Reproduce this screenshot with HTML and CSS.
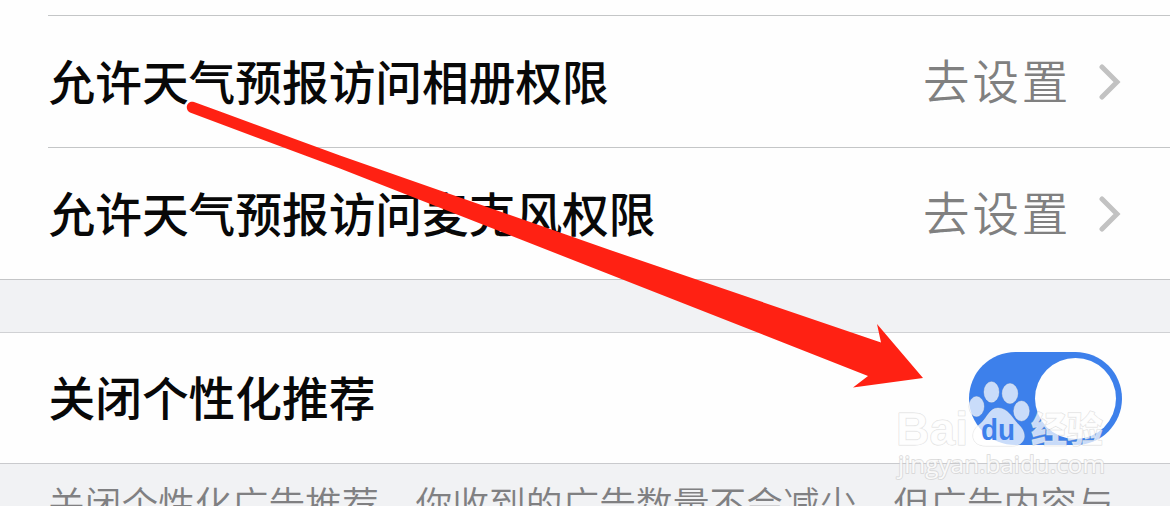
FILE: index.html
```html
<!DOCTYPE html>
<html lang="zh-CN">
<head>
<meta charset="utf-8">
<title>权限设置</title>
<link rel="stylesheet" href="styles.css">
</head>
<body>
<main class="screen">
  <section class="group">
    <div class="row">
      <span class="title">允许天气预报访问相册权限</span>
      <span class="value">去设置</span>
      <svg class="chevron" viewBox="0 0 22 36"><path d="M3 3 18 18 3 33"/></svg>
    </div>
    <div class="row">
      <span class="title">允许天气预报访问麦克风权限</span>
      <span class="value">去设置</span>
      <svg class="chevron" viewBox="0 0 22 36"><path d="M3 3 18 18 3 33"/></svg>
    </div>
  </section>
  <section class="switch-row">
    <span class="title">关闭个性化推荐</span>
    <span class="toggle"><span class="knob"></span></span>
  </section>
  <p class="note">关闭个性化广告推荐，你收到的广告数量不会减少，但广告内容与</p>
  <svg class="overlay" viewBox="0 0 1170 506">
    <path class="arrow" d="M194 102Q268 129 340 155.500L610 250 881 342.500 877 324 923 378 853 387.500 868 376 550 251 340 168.500 190 112.500C184 109 187 100 194 102Z"/>
    <g class="mark">
      <text class="latin" x="896" y="445" textLength="72" lengthAdjust="spacingAndGlyphs">Bai</text>
      <g class="paw">
        <ellipse cx="976.500" cy="406.500" rx="7.500" ry="10"/>
        <ellipse cx="991.500" cy="392" rx="7.500" ry="10.300"/>
        <ellipse cx="1010" cy="393.500" rx="7.800" ry="10"/>
        <ellipse cx="1021.500" cy="411" rx="7.800" ry="10"/>
        <path d="M998 408C1008 408 1012 418 1018 424 1029 434 1025 446 1012 446H986C970 446 970 431 979 425 987 419 989 408 998 408Z"/>
      </g>
      <text class="du" x="981" y="440" textLength="34" lengthAdjust="spacingAndGlyphs">du</text>
      <text class="cn" x="1031" y="443" textLength="72" lengthAdjust="spacingAndGlyphs">经验</text>
      <text class="url" x="898" y="473" textLength="207" lengthAdjust="spacingAndGlyphs">jingyan.baidu.com</text>
    </g>
  </svg>
</main>
</body>
</html>
```
FILE: styles.css
```css
body {
  margin: 0;
  font-family: "Noto Sans CJK SC", sans-serif;
}
.screen {
  position: relative;
  width: 1170px;
  height: 506px;
  overflow: hidden;
  background: #f1f2f4;
}
.group {
  box-sizing: border-box;
  height: 280px;
  padding: 15px 0 0 48px;
  background: #fefefe;
  border-bottom: 1px solid #c4c5c7;
}
.row {
  box-sizing: border-box;
  display: flex;
  align-items: center;
  height: 132px;
  padding: 0 49px 0 0;
  border-top: 1px solid #c4c6c7;
}
.title {
  flex: 1;
  margin-bottom: 3px;
  padding-left: .5px;
  font-size: 46.700px;
  font-weight: 500;
  line-height: 68px;
  color: #080808;
  white-space: nowrap;
}
.switch-row .title {
  margin-bottom: 5px;
}
.value {
  margin: 0 28px 6px 0;
  font-size: 46.500px;
  font-weight: 350;
  letter-spacing: 2.800px;
  line-height: 68px;
  color: #808080;
}
.chevron {
  width: 22px;
  height: 36px;
  fill: none;
  stroke: #c2c2c2;
  stroke-width: 5;
  stroke-linecap: round;
}
.switch-row {
  box-sizing: border-box;
  display: flex;
  align-items: center;
  height: 132px;
  margin-top: 52px;
  padding: 0 48px;
  background: #fefefe;
  border-top: 1px solid #d0d1d4;
  border-bottom: 1px solid #c9cacd;
}
.toggle {
  box-sizing: border-box;
  display: flex;
  justify-content: flex-end;
  width: 153px;
  height: 93px;
  padding: 6px;
  border-radius: 47px;
  background: #3d80eb;
}
.knob {
  width: 81px;
  height: 81px;
  border-radius: 50%;
  background: #fefefe;
}
.note {
  margin: 0;
  padding: 11px 0 0 48px;
  font-size: 36.750px;
  font-weight: 350;
  line-height: 54px;
  color: #808082;
  white-space: nowrap;
}
.overlay {
  position: absolute;
  inset: 0;
  width: 1170px;
  height: 506px;
}
.arrow {
  fill: #ff2113;
}
.mark {
  fill: #fff;
  fill-opacity: .72;
  stroke: #c9c9c9;
  stroke-opacity: .6;
  stroke-width: 1;
  stroke-linejoin: round;
  paint-order: stroke;
}
.latin {
  font: 700 46px "Liberation Sans", sans-serif;
}
.paw {
  stroke-opacity: .5;
}
.du {
  font: 700 30px "Liberation Sans", sans-serif;
  fill: #3d80eb;
  fill-opacity: 1;
  stroke: none;
}
.cn {
  font: 900 36px "Noto Sans CJK SC", sans-serif;
}
.url {
  font: 400 24px "Open Sans", sans-serif;
  fill-opacity: .85;
  stroke-width: 1.8;
}
```
